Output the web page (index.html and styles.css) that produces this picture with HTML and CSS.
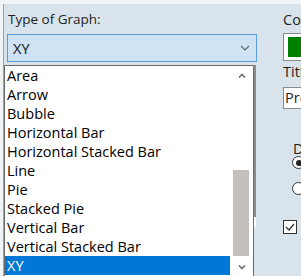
FILE: index.html
```html
<!DOCTYPE html>
<html>
<head>
    <meta charset="utf-8">
    <link rel="stylesheet" href="styles.css">
    <title>Graph</title>
</head>
<body>
    <div class="panel">
        <div class="left">
            <div class="label">Type of Graph:</div>
            <div class="combo">
                <span>XY</span>
                <svg class="chev" width="10" height="6" viewBox="0 0 10 6"><path d="M1 1 L5 5 L9 1" fill="none" stroke="#606060" stroke-width="1.1"/></svg>
            </div>
            <div class="list">
                <div class="items">
                    <div class="item">Area</div>
                    <div class="item">Arrow</div>
                    <div class="item">Bubble</div>
                    <div class="item">Horizontal Bar</div>
                    <div class="item">Horizontal Stacked Bar</div>
                    <div class="item">Line</div>
                    <div class="item">Pie</div>
                    <div class="item">Stacked Pie</div>
                    <div class="item">Vertical Bar</div>
                    <div class="item">Vertical Stacked Bar</div>
                    <div class="item selected">XY</div>
                </div>
                <div class="scroll">
                    <div class="arrow">
                        <svg width="8" height="5" viewBox="0 0 8 5"><path d="M1 4.5 L4 1.5 L7 4.5" fill="none" stroke="#707070" stroke-width="1.6"/></svg>
                    </div>
                    <div class="track">
                        <div class="thumb"></div>
                    </div>
                    <div class="arrow">
                        <svg width="8" height="5" viewBox="0 0 8 5"><path d="M1 0.5 L4 3.5 L7 0.5" fill="none" stroke="#707070" stroke-width="1.6"/></svg>
                    </div>
                </div>
            </div>
        </div>
        <div class="right">
            <div class="label color-label">Color:</div>
            <div class="swatch"><div class="green"></div></div>
            <div class="label title-label">Title:</div>
            <div class="textbox">Preview</div>
            <div class="group">
                <div class="glabel">Direction</div>
                <div class="radio on"></div>
                <div class="radio"></div>
            </div>
            <div class="check">
                <svg width="10" height="8" viewBox="0 0 10 8"><path d="M1 4 L4 7 L9 1" fill="none" stroke="#333" stroke-width="1.3"/></svg>
            </div>
        </div>
    </div>
</body>
</html>
```

FILE: styles.css
```css
html, body {
    margin: 0;
    height: 100%;
    overflow: hidden;
}

body {
    background: #f1f4f6;
    font-family: "Open Sans", sans-serif;
    font-size: 13.5px;
    color: #1e1e1e;
}

.panel {
    display: flex;
    margin-top: 4px;
    margin-left: 3px;
    height: 272px;
    background: #d8e3eb;
    border-left: 1px solid #98a2aa;
}

.left {
    width: 253px;
    flex: none;
}

.label {
    line-height: 18px;
    white-space: nowrap;
}

.left .label {
    padding: 6px 0 0 4px;
}

/* combo box */
.combo {
    margin: 6px 0 0 3px;
    height: 28px;
    box-sizing: border-box;
    border: 1px solid #5a9bd8;
    background: #cfe3f5;
    display: flex;
    align-items: center;
    justify-content: space-between;
    padding: 0 6px 0 5px;
    font-size: 14.5px;
    color: #111;
}

/* dropped list */
.list {
    position: relative;
    margin-top: 3px;
    width: 250px;
    height: 215px;
    box-sizing: border-box;
    background: #fff;
    border: 1px solid #6b6b6b;
    border-bottom: none;
    display: flex;
    font-size: 14.5px;
    color: #000;
}

/* shadow strip on the right of the popup */
.list::after {
    content: "";
    position: absolute;
    top: -1px;
    right: -3px;
    width: 2px;
    height: 152px;
    background: #8c8c8c;
    border-bottom: 10px solid #fff;
}

.items {
    flex: 1;
}

.item {
    height: 19px;
    line-height: 19px;
    padding-left: 2px;
    white-space: nowrap;
}

.selected {
    background: #0078d7;
    color: #fff;
}

.scroll {
    width: 23px;
    display: flex;
    flex-direction: column;
    background: #fff;
}

.arrow {
    height: 19px;
    display: flex;
    align-items: center;
    justify-content: center;
}

.track {
    height: 171px;
    display: flex;
    flex-direction: column;
    justify-content: flex-end;
    padding: 0 4px 2px 3px;
}

.thumb {
    height: 86px;
    background: #c2bfbc;
}

/* right column */
.right {
    padding-left: 26px;
    font-size: 14.5px;
}

.color-label {
    padding-top: 7px;
}

.swatch {
    margin-top: 4px;
    width: 30px;
    height: 28px;
    box-sizing: border-box;
    border: 1px solid #8a8a8a;
    background: #fff;
    padding: 3px 4px;
}

.green {
    height: 100%;
    background: #008000;
}

.title-label {
    margin-top: 2px;
}

.textbox {
    margin-top: 6px;
    height: 22px;
    width: 60px;
    box-sizing: border-box;
    border: 1px solid #8a8a8a;
    background: #fff;
    padding: 0 1px;
    line-height: 20px;
}

.group {
    margin-top: 32px;
    padding-left: 9px;
    display: flex;
    flex-direction: column;
    align-items: flex-start;
}

.glabel {
    height: 15px;
    line-height: 16px;
    padding-left: 1px;
    white-space: nowrap;
}

.radio {
    width: 13px;
    height: 13px;
    border: 1px solid #333;
    border-radius: 50%;
    background: #fff;
    margin-bottom: 13px;
    box-sizing: border-box;
    position: relative;
}

.radio:last-child {
    margin-bottom: 0;
}

.radio.on::after {
    content: "";
    position: absolute;
    left: 2.5px;
    top: 2.5px;
    width: 6px;
    height: 6px;
    border-radius: 50%;
    background: #222;
}

.check {
    margin-top: 25px;
    width: 14px;
    height: 14px;
    box-sizing: border-box;
    border: 1px solid #333;
    background: #fff;
    display: flex;
    align-items: center;
    justify-content: center;
}
```
